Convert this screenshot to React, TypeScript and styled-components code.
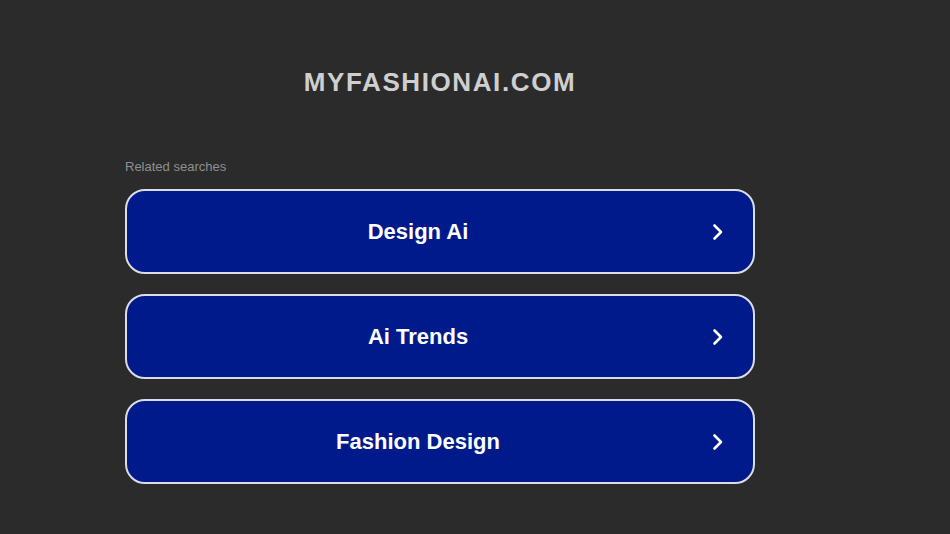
import styled, { createGlobalStyle } from "styled-components";

const GlobalStyle = createGlobalStyle`
    html, body {
        margin: 0;
        padding: 0;
        background-color: #2b2b2b;
    }
    body {
        font-family: "Liberation Sans", Arial, sans-serif;
    }
`;

const Page = styled.main`
    min-height: 534px;
    padding: 67px 0 0 125px;
    box-sizing: border-box;
`;

const Column = styled.div`
    width: 630px;
`;

const DomainTitle = styled.h1`
    margin: 0;
    color: #cfcfcf;
    font-size: 26px;
    line-height: 30px;
    font-weight: 700;
    letter-spacing: 1.6px;
    text-align: center;
`;

const RelatedLabel = styled.p`
    margin: 62px 0 0;
    color: #8f8f8f;
    font-size: 13px;
    line-height: 16px;
`;

const LinkList = styled.div`
    display: flex;
    flex-direction: column;
    gap: 20px;
    margin-top: 14px;
`;

const SearchLink = styled.a`
    display: flex;
    align-items: center;
    height: 85px;
    padding: 0 13px;
    box-sizing: border-box;
    background-color: #011a8b;
    border: 2px solid #dcdce4;
    border-radius: 20px;
    color: #ffffff;
    text-decoration: none;
    cursor: pointer;
`;

const LinkText = styled.span`
    flex: 1;
    text-align: center;
    font-size: 22px;
    font-weight: 700;
`;

const ArrowBox = styled.span`
    width: 44px;
    display: flex;
    justify-content: center;
    align-items: center;
`;

const searches = ["Design Ai", "Ai Trends", "Fashion Design"];

const Chevron = () => (
    <svg width="14" height="18" viewBox="0 0 14 18" fill="none">
        <path d="M3.5 2.5 L10 9 L3.5 15.5" stroke="#ffffff" strokeWidth="2.6" strokeLinecap="round" strokeLinejoin="round" />
    </svg>
);

const App = () => {
    return (
        <Page>
            <GlobalStyle />
            <Column>
                <DomainTitle>MYFASHIONAI.COM</DomainTitle>
                <RelatedLabel>Related searches</RelatedLabel>
                <LinkList>
                    {searches.map((s) => (
                        <SearchLink key={s}>
                            <LinkText>{s}</LinkText>
                            <ArrowBox>
                                <Chevron />
                            </ArrowBox>
                        </SearchLink>
                    ))}
                </LinkList>
            </Column>
        </Page>
    );
};

export default App;
